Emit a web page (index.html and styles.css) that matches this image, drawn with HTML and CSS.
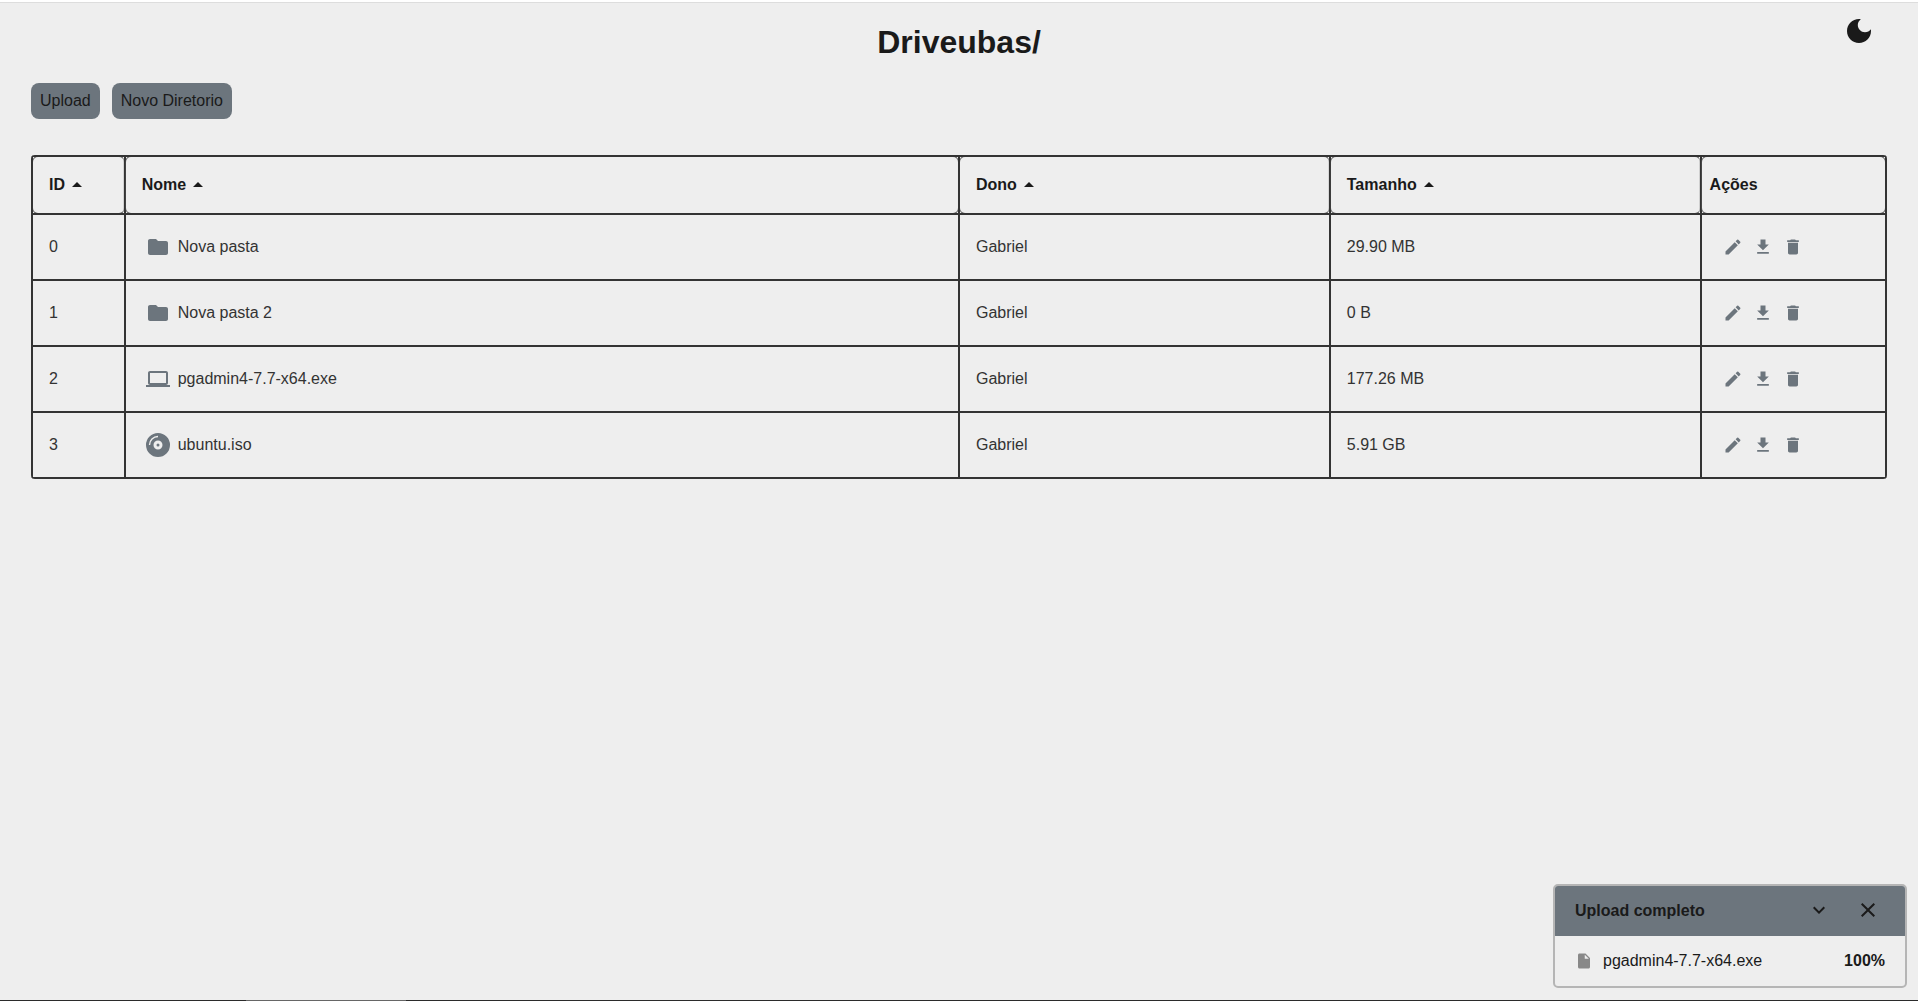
FILE: index.html
```html
<!DOCTYPE html>
<html lang="pt-BR">
<head>
<meta charset="utf-8">
<meta name="viewport" content="width=device-width, initial-scale=1">
<title>Driveubas</title>
<link rel="stylesheet" href="styles.css">
</head>
<body>
<svg class="sprite" aria-hidden="true">
  <symbol id="up" viewBox="0 0 24 24"><path d="m7 14 5-5 5 5z"/></symbol>
  <symbol id="folder" viewBox="0 0 24 24"><path d="M10 4H4c-1.1 0-1.99.9-1.99 2L2 18c0 1.1.9 2 2 2h16c1.1 0 2-.9 2-2V8c0-1.1-.9-2-2-2h-8l-2-2z"/></symbol>
  <symbol id="laptop" viewBox="0 0 24 24"><path d="M20 18c1.1 0 1.990-.9 1.990-2L22 6c0-1.100-.9-2-2-2H4c-1.100 0-2 .9-2 2v10c0 1.100.9 2 2 2H0v2h24v-2h-4zM4 6h16v10H4V6z"/></symbol>
  <symbol id="disc" viewBox="0 0 24 24"><path fill-rule="evenodd" d="M12 0a12 12 0 1 0 0 24 12 12 0 0 0 0-24zM12 7.500a4.500 4.500 0 1 1 0 9 4.500 4.500 0 0 1 0-9zM12 10.500a1.500 1.500 0 1 0 0 3 1.500 1.500 0 0 0 0-3z"/><path class="shine" d="M3.500 12A8.500 8.500 0 0 1 12 3.500"/></symbol>
  <symbol id="pencil" viewBox="0 0 24 24"><path d="M3 17.250V21h3.750L17.810 9.940l-3.750-3.750L3 17.250zM20.710 7.040c.39-.39.39-1.020 0-1.410l-2.340-2.340a.996.996 0 0 0-1.410 0l-1.830 1.830 3.750 3.750 1.830-1.830z"/></symbol>
  <symbol id="download" viewBox="0 0 24 24"><path d="M19 9h-4V3H9v6H5l7 7 7-7zM5 18v2h14v-2H5z"/></symbol>
  <symbol id="trash" viewBox="0 0 24 24"><path d="M6 19c0 1.100.9 2 2 2h8c1.100 0 2-.9 2-2V7H6v12zM19 4h-3.500l-1-1h-5l-1 1H5v2h14V4z"/></symbol>
  <symbol id="moon" viewBox="0 0 24 24"><path d="M12 3c-4.970 0-9 4.030-9 9s4.030 9 9 9 9-4.030 9-9c0-.46-.04-.92-.1-1.360-.98 1.370-2.580 2.260-4.400 2.260-2.980 0-5.400-2.420-5.400-5.400 0-1.810.89-3.420 2.260-4.400C12.920 3.040 12.460 3 12 3z"/></symbol>
  <symbol id="down" viewBox="0 0 24 24"><path d="M16.590 8.590 12 13.170 7.410 8.590 6 10l6 6 6-6z"/></symbol>
  <symbol id="close" viewBox="0 0 24 24"><path d="M19 6.410 17.590 5 12 10.590 6.410 5 5 6.410 10.590 12 5 17.590 6.410 19 12 13.410 17.590 19 19 17.590 13.410 12z"/></symbol>
  <symbol id="file" viewBox="0 0 24 24"><path d="M6 2c-1.100 0-2 .9-2 2v16c0 1.100.9 2 2 2h12c1.100 0 2-.9 2-2V8l-6-6H6zm7 7V3.500L18.500 9H13z"/></symbol>
</svg>

<header class="header">
  <h1 class="title">Driveubas/</h1>
  <button class="icon-button theme" type="button" aria-label="Alternar tema"><svg class="icon icon-large"><use href="#moon"/></svg></button>
</header>

<main class="main">
  <div class="toolbar">
    <button class="button" type="button">Upload</button>
    <button class="button" type="button">Novo Diretorio</button>
  </div>

  <div class="table-frame">
    <table class="files">
      <colgroup><col class="col-id"><col class="col-name"><col class="col-owner"><col class="col-size"><col class="col-actions"></colgroup>
      <thead>
        <tr>
          <th scope="col"><div class="head-cell"><button class="sort" type="button">ID<svg class="icon"><use href="#up"/></svg></button></div></th>
          <th scope="col"><div class="head-cell"><button class="sort" type="button">Nome<svg class="icon"><use href="#up"/></svg></button></div></th>
          <th scope="col"><div class="head-cell"><button class="sort" type="button">Dono<svg class="icon"><use href="#up"/></svg></button></div></th>
          <th scope="col"><div class="head-cell"><button class="sort" type="button">Tamanho<svg class="icon"><use href="#up"/></svg></button></div></th>
          <th scope="col"><div class="head-cell head-actions">Ações</div></th>
        </tr>
      </thead>
      <tbody>
        <tr>
          <td>0</td>
          <td><div class="name"><svg class="icon"><use href="#folder"/></svg>Nova pasta</div></td>
          <td>Gabriel</td>
          <td>29.90 MB</td>
          <td><div class="actions">
            <button class="icon-button" type="button" aria-label="Renomear"><svg class="icon icon-small"><use href="#pencil"/></svg></button>
            <button class="icon-button" type="button" aria-label="Baixar"><svg class="icon icon-small"><use href="#download"/></svg></button>
            <button class="icon-button" type="button" aria-label="Excluir"><svg class="icon icon-small"><use href="#trash"/></svg></button>
          </div></td>
        </tr>
        <tr>
          <td>1</td>
          <td><div class="name"><svg class="icon"><use href="#folder"/></svg>Nova pasta 2</div></td>
          <td>Gabriel</td>
          <td>0 B</td>
          <td><div class="actions">
            <button class="icon-button" type="button" aria-label="Renomear"><svg class="icon icon-small"><use href="#pencil"/></svg></button>
            <button class="icon-button" type="button" aria-label="Baixar"><svg class="icon icon-small"><use href="#download"/></svg></button>
            <button class="icon-button" type="button" aria-label="Excluir"><svg class="icon icon-small"><use href="#trash"/></svg></button>
          </div></td>
        </tr>
        <tr>
          <td>2</td>
          <td><div class="name"><svg class="icon"><use href="#laptop"/></svg>pgadmin4-7.7-x64.exe</div></td>
          <td>Gabriel</td>
          <td>177.26 MB</td>
          <td><div class="actions">
            <button class="icon-button" type="button" aria-label="Renomear"><svg class="icon icon-small"><use href="#pencil"/></svg></button>
            <button class="icon-button" type="button" aria-label="Baixar"><svg class="icon icon-small"><use href="#download"/></svg></button>
            <button class="icon-button" type="button" aria-label="Excluir"><svg class="icon icon-small"><use href="#trash"/></svg></button>
          </div></td>
        </tr>
        <tr>
          <td>3</td>
          <td><div class="name"><svg class="icon"><use href="#disc"/></svg>ubuntu.iso</div></td>
          <td>Gabriel</td>
          <td>5.91 GB</td>
          <td><div class="actions">
            <button class="icon-button" type="button" aria-label="Renomear"><svg class="icon icon-small"><use href="#pencil"/></svg></button>
            <button class="icon-button" type="button" aria-label="Baixar"><svg class="icon icon-small"><use href="#download"/></svg></button>
            <button class="icon-button" type="button" aria-label="Excluir"><svg class="icon icon-small"><use href="#trash"/></svg></button>
          </div></td>
        </tr>
      </tbody>
    </table>
  </div>
</main>

<section class="uploads" aria-label="Uploads">
  <div class="uploads-head">
    <h2 class="uploads-title">Upload completo</h2>
    <button class="icon-button" type="button" aria-label="Minimizar"><svg class="icon"><use href="#down"/></svg></button>
    <button class="icon-button" type="button" aria-label="Fechar"><svg class="icon"><use href="#close"/></svg></button>
  </div>
  <div class="upload">
    <svg class="icon icon-file"><use href="#file"/></svg>
    <span class="upload-name">pgadmin4-7.7-x64.exe</span>
    <strong>100%</strong>
  </div>
</section>
<div class="bottom-edge"></div>
</body>
</html>
```
FILE: styles.css
```css
:root {
  --page: #eee;
  --ink: #1a1a1a;
  --line: #333;
  --slate: #6c757d;
}

* {
  box-sizing: border-box;
}

body {
  min-height: 100vh;
  margin: 0;
  border-top: 2px solid #fff;
  background: var(--page);
  box-shadow: inset 0 1px #ddd;
  color: var(--ink);
  font: 16px/20px "Liberation Sans", Arial, sans-serif;
}

button {
  border: 0;
  background: none;
  color: inherit;
  font: inherit;
  cursor: pointer;
}

.sprite {
  position: absolute;
  width: 0;
  height: 0;
}

.icon {
  display: block;
  flex: none;
  width: 24px;
  height: 24px;
  fill: currentColor;
}

.icon-small {
  width: 20px;
  height: 20px;
}

.icon-large {
  width: 32px;
  height: 32px;
}

.shine {
  fill: none;
  stroke: var(--page);
  stroke-width: 1.4;
}

.icon-button {
  padding: 0;
}

.header {
  display: grid;
  grid-template-columns: 1fr auto 1fr;
  align-items: start;
  padding: 13px 43px 0;
}

.title {
  grid-column: 2;
  margin: 8px 0 6px;
  font-size: 32px;
  line-height: 38px;
}

.theme {
  justify-self: end;
}

.main {
  padding: 16px 31px;
}

.toolbar {
  display: flex;
  gap: 12px;
  margin-bottom: 36px;
}

.button {
  height: 36px;
  padding: 0 9px;
  border-radius: 8px;
  background: var(--slate);
}

.table-frame {
  border-radius: 4px;
  overflow: hidden;
}

.files {
  width: 100%;
  border-collapse: collapse;
  table-layout: fixed;
}

.col-id { width: 5%; }
.col-name { width: 45%; }
.col-owner { width: 20%; }
.col-size { width: 20%; }
.col-actions { width: 10%; }

.files th,
.files td {
  padding: 16px;
  border: 2px solid var(--line);
  text-align: left;
}

.files th {
  padding: 0;
  background: #fff;
}

/* Rounded panel in each heading; the clip keeps its outline to the corners. */
.head-cell {
  display: flex;
  align-items: center;
  height: 56px;
  padding: 0 16px;
  border-radius: 5px;
  background: var(--page);
  box-shadow: 0 0 0 1px #666;
  clip-path: inset(0);
}

.head-actions {
  padding: 0 8px;
}

.files td {
  height: 66px;
  color: var(--line);
}

.sort {
  display: flex;
  align-items: center;
  padding: 0;
}

.name {
  display: flex;
  align-items: center;
  gap: 8px;
  padding: 0 4px;
}

.name .icon,
.actions {
  color: var(--slate);
}

.actions {
  display: flex;
  gap: 10px;
  padding: 0 5px;
}

.uploads {
  position: fixed;
  right: 11px;
  bottom: 13px;
  width: 354px;
  border: 2px solid #b5b5b5;
  border-radius: 5px;
  background: var(--page);
  overflow: hidden;
}

.uploads-head,
.upload {
  display: flex;
  align-items: center;
  height: 50px;
  padding: 0 20px;
}

.uploads-head {
  gap: 25px;
  padding-right: 25px;
  background: var(--slate);
}

.uploads-title {
  flex: 1;
  margin: 0;
  font-size: 16px;
}

.uploads-head .icon-button {
  padding-bottom: 2px;
}

.upload {
  gap: 10px;
}

.icon-file {
  width: 18px;
  height: 18px;
  color: #888;
}

.upload-name {
  flex: 1;
}

.bottom-edge {
  position: fixed;
  right: 0;
  bottom: 0;
  left: 0;
  height: 1px;
  background: linear-gradient(90deg, #2b2b2b 246px, #666 246px 406px, #2b2b2b 406px);
}
```
